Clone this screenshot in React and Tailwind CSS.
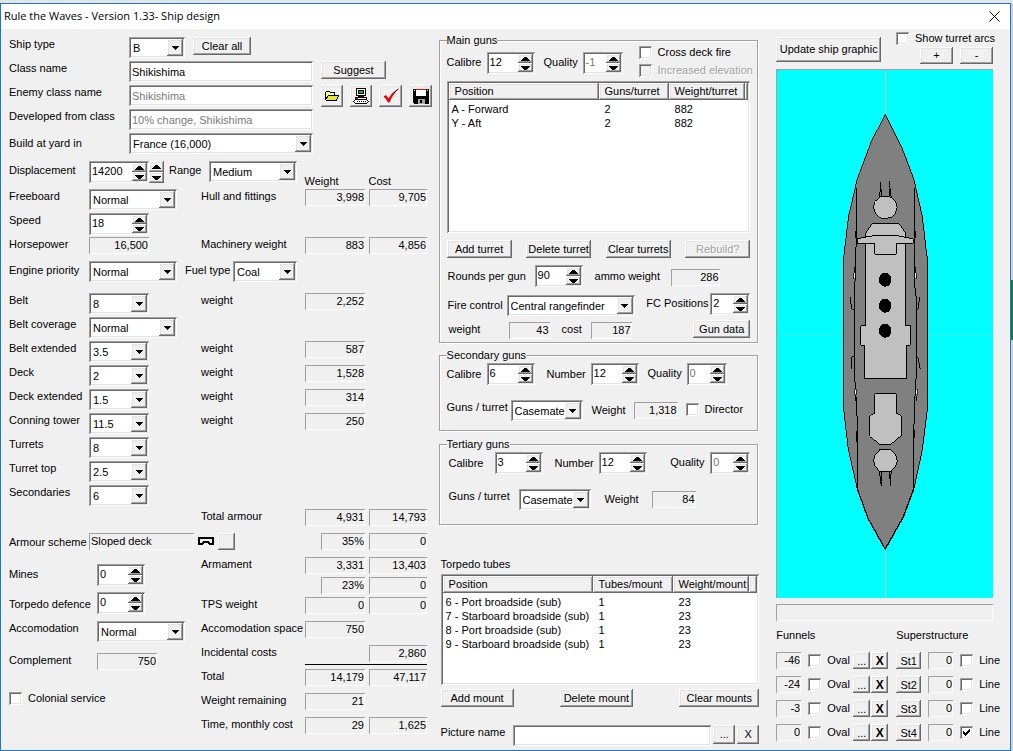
import React, { useId, useState } from 'react';
import clsx from 'clsx';

const sunken = 'shadow-[inset_1px_1px_0_#a0a0a0,inset_-1px_-1px_0_#fff,inset_2px_2px_0_#696969,inset_-2px_-2px_0_#e3e3e3]';
const sunkenThin = 'shadow-[inset_1px_1px_0_#a0a0a0,inset_-1px_-1px_0_#fff]';
const raised = 'shadow-[inset_-1px_-1px_0_#696969,inset_1px_1px_0_#fff,inset_-2px_-2px_0_#a0a0a0,inset_2px_2px_0_#e3e3e3]';

function Button({ className, children, ...props }) {
  return (
    <button
      type="button"
      className={clsx('flex shrink-0 items-center justify-center bg-[#f0f0f0] whitespace-nowrap disabled:text-[#a0a0a0] disabled:[text-shadow:1px_1px_0_#fff]', raised, className)}
      {...props}
    >
      {children}
    </button>
  );
}

function Label({ className, ...props }) {
  return <label className={clsx('shrink-0 leading-[14px] whitespace-nowrap', className)} {...props} />;
}

function Value({ className, children, ...props }) {
  return (
    <output className={clsx('block h-[17px] shrink-0 pr-px text-right leading-[17px]', sunkenThin, className)} {...props}>
      {children}
    </output>
  );
}

function TextBox({ className, ...props }) {
  return (
    <input
      type="text"
      className={clsx('h-[21px] min-w-0 bg-white px-[3px] outline-none disabled:text-[#7a7a7a]', sunken, className)}
      {...props}
    />
  );
}

function Select({ className, value, options = [], ...props }) {
  const [current, setCurrent] = useState(value);
  return (
    <div className={clsx('relative h-[21px] shrink-0', className)}>
      <select
        value={current}
        onChange={(e) => setCurrent(e.target.value)}
        className={clsx('block h-full w-full appearance-none bg-white pt-px pr-[18px] pl-1 outline-none', sunken)}
        {...props}
      >
        {[value, ...options].map(option => (
          <option key={option}>{option}</option>
        ))}
      </select>
      <span className={clsx('pointer-events-none absolute top-[2px] right-[2px] bottom-[2px] flex w-4 items-center justify-center bg-[#f0f0f0]', raised)}>
        <svg width="7" height="4" viewBox="0 0 7 4" shapeRendering="crispEdges">
          <path d="M0 0H7V1H6V2H5V3H4V4H3V3H2V2H1V1H0Z" />
        </svg>
      </span>
    </div>
  );
}

function Arrows({ className, onStep }) {
  return (
    <span className={clsx('flex w-[15px] shrink-0 flex-col', className)}>
      <button type="button" aria-label="Increase" onClick={() => onStep(1)} className={clsx('flex flex-1 items-center justify-center bg-[#f0f0f0]', raised)}>
        <svg width="9" height="4" viewBox="0 0 9 4" shapeRendering="crispEdges">
          <path d="M3 0H6V1H7V2H8V3H9V4H0V3H1V2H2V1H3Z" />
        </svg>
      </button>
      <button type="button" aria-label="Decrease" onClick={() => onStep(-1)} className={clsx('flex flex-1 items-center justify-center bg-[#f0f0f0]', raised)}>
        <svg width="9" height="4" viewBox="0 0 9 4" shapeRendering="crispEdges">
          <path d="M0 0H9V1H8V2H7V3H6V4H3V3H2V2H1V1H0Z" />
        </svg>
      </button>
    </span>
  );
}

function Spin({ id, value, disabled, className }) {
  const [current, setCurrent] = useState(value);
  return (
    <div className={clsx('flex h-[22px] shrink-0 bg-white p-[2px]', sunken, className)}>
      <input
        id={id}
        type="text"
        value={current}
        disabled={disabled}
        onChange={(e) => setCurrent(e.target.value)}
        className="w-0 min-w-0 flex-1 bg-transparent pb-px pl-px outline-none disabled:text-[#7a7a7a]"
      />
      <Arrows onStep={(step) => !disabled && setCurrent(String(Number(current) + step))} />
    </div>
  );
}

function LabeledSpin({ label, labelClass, value, disabled, className }) {
  const id = useId();
  return (
    <>
      <Label htmlFor={id} className={labelClass}>{label}</Label>
      <Spin id={id} value={value} disabled={disabled} className={className} />
    </>
  );
}

function LabeledSelect({ label, labelClass, value, className }) {
  const id = useId();
  return (
    <>
      <Label htmlFor={id} className={labelClass}>{label}</Label>
      <Select id={id} value={value} className={className} />
    </>
  );
}

function CheckBox({ label, checked = false, disabled, className }) {
  const [on, setOn] = useState(checked);
  return (
    <label className={clsx('flex shrink-0 items-center gap-[6px] leading-[14px] whitespace-nowrap', disabled && 'text-[#a0a0a0] [text-shadow:1px_1px_0_#fff]', className)}>
      <span className="relative flex">
        <input
          type="checkbox"
          checked={on}
          disabled={disabled}
          onChange={() => setOn(!on)}
          className={clsx('h-[13px] w-[13px] appearance-none bg-white disabled:bg-[#f0f0f0]', sunken)}
        />
        {on && (
          <svg className="pointer-events-none absolute top-[3px] left-[3px]" width="7" height="7" viewBox="0 0 7 7" shapeRendering="crispEdges">
            <path d="M0 2H1V3H2V4H3V3H4V2H5V1H6V0H7V3H6V4H5V5H4V6H3V7H2V6H1V5H0Z" />
          </svg>
        )}
      </span>
      {label}
    </label>
  );
}

// One line of the cost sheet: name, control, then weight and cost
function SheetRow({ label, labelClass, id, note, weight, cost, short, wide, className = 'h-6', children }) {
  return (
    <div className={clsx('grid grid-cols-[80px_112px_minmax(104px,1fr)_64px_58px] items-start', className)}>
      <Label htmlFor={id} className={labelClass}>{label}</Label>
      <div className={clsx('flex items-start', wide && 'col-span-2')}>{children}</div>
      {!wide && <span className="leading-[14px] whitespace-nowrap">{note}</span>}
      <div className="flex justify-end pr-1">
        {weight && <Value className={short ? 'w-11' : 'w-[60px]'}>{weight}</Value>}
      </div>
      {cost && <Value>{cost}</Value>}
    </div>
  );
}

function TotalRow({ label, weight, cost, short, className = 'h-6' }) {
  return (
    <div className={clsx('grid grid-cols-[minmax(104px,1fr)_64px_58px] items-start', className)}>
      <span className="leading-[14px] whitespace-nowrap">{label}</span>
      <div className="flex justify-end pr-1">
        {weight && <Value className={short ? 'w-11' : 'w-[60px]'}>{weight}</Value>}
      </div>
      {cost && <Value>{cost}</Value>}
    </div>
  );
}

function FolderIcon() {
  return (
    <svg width="16" height="14" viewBox="0 0 16 14" shapeRendering="crispEdges">
      <path d="M1.5 10.5V3.5L2.5 2.5H5.5L6.5 3.5H10.5V6.5H14.5L12.5 10.5Z" fill="#ffff66" stroke="#000" />
      <path d="M1.5 10.5L4.5 6.5H14.5L12.5 11.5H2.5Z" fill="#e6e63c" stroke="#000" />
      <path d="M3 4H5V5H3ZM6 5H8V6H6Z" fill="#fff" />
    </svg>
  );
}

function ComputerIcon() {
  return (
    <svg width="16" height="16" viewBox="0 0 16 16" shapeRendering="crispEdges">
      <path d="M3.5 0.5H12.5V7.5H3.5Z" fill="#fff" stroke="#000" />
      <path d="M5.5 2.5H10.5V5.5H5.5Z" fill="#00c030" stroke="#000" />
      <path d="M5 8H11V9H5Z" />
      <path d="M2.5 9.5H13.5V11.5H2.5Z" fill="#fff" stroke="#000" />
      <path d="M3 10H5V11H3Z" fill="#f00" />
      <path d="M2.5 11.5H13.5L15.5 13.5L13.5 15.5H2.5L0.5 13.5Z" fill="#fff" stroke="#000" />
      <path d="M4 13H5V14H4ZM6 13H7V14H6ZM8 13H9V14H8ZM10 13H11V14H10ZM12 13H13V14H12Z" />
    </svg>
  );
}

function TickIcon() {
  return (
    <svg width="16" height="16" viewBox="0 0 16 16">
      <path d="M0.500 8.500L3 7L5.500 10.500Q9 4 15.500 1Q10 6 6.500 14.500H5Q3.500 11 0.500 8.500Z" fill="#f00000" />
      <path d="M10 6Q12 3 15.500 1" fill="none" stroke="#700000" />
    </svg>
  );
}

function FloppyIcon() {
  return (
    <svg width="16" height="16" viewBox="0 0 16 16" shapeRendering="crispEdges">
      <path d="M0 1H16V16H1L0 15Z" />
      <path d="M3 1H13V8H3Z" fill="#fff" />
      <path d="M3 1H13V2H3Z" fill="#f00" />
      <path d="M1 2H2V3H1ZM14 2H15V3H14Z" fill="#fff" />
      <path d="M5 11H12V16H5Z" fill="#a8a8a8" />
      <path d="M7 12H9V15H7Z" />
    </svg>
  );
}

const armour = [
  ['Belt', '8', 'w-[60px]', '2,252'],
  ['Belt coverage', 'Normal', 'w-[88px]', null],
  ['Belt extended', '3.5', 'w-[60px]', '587'],
  ['Deck', '2', 'w-[60px]', '1,528'],
  ['Deck extended', '1.5', 'w-[60px]', '314'],
  ['Conning tower', '11.5', 'w-[60px]', '250'],
  ['Turrets', '8', 'w-[60px]', null],
  ['Turret top', '2.5', 'w-[60px]', null],
  ['Secondaries', '6', 'w-[60px]', null],
];

function HullColumn() {
  return (
    <div className="min-w-0 pt-2 pr-3">
      <div className="flex h-6 items-start">
        <Label htmlFor="shipType" className="w-[120px]">Ship type</Label>
        <Select id="shipType" value="B" options={['BC', 'CA', 'CL', 'DD']} className="w-14" />
        <Button className="ml-2 h-[18px] w-[58px]">Clear all</Button>
      </div>
      <div className="flex h-6 items-start">
        <Label htmlFor="className" className="w-[120px]">Class name</Label>
        <TextBox id="className" defaultValue="Shikishima" className="w-[184px]" />
        <Button className="ml-2 h-[18px] w-[65px]">Suggest</Button>
      </div>
      <div className="flex h-6 items-start">
        <Label htmlFor="enemyName" className="w-[120px]">Enemy class name</Label>
        <TextBox id="enemyName" defaultValue="Shikishima" disabled className="w-[184px] shrink-0" />
        <div className="ml-2 flex gap-[7px]">
          <Button aria-label="Open" className="h-[22px] w-[22px]"><FolderIcon /></Button>
          <Button aria-label="Export" className="h-[22px] w-[22px]"><ComputerIcon /></Button>
          <Button aria-label="Accept" className="h-[22px] w-[23px]"><TickIcon /></Button>
          <Button aria-label="Save" className="h-[22px] w-[23px]"><FloppyIcon /></Button>
        </div>
      </div>
      <div className="flex h-6 items-start">
        <Label htmlFor="developed" className="w-[120px]">Developed from class</Label>
        <TextBox id="developed" defaultValue="10% change, Shikishima" disabled className="w-[184px]" />
      </div>
      <div className="flex h-7 items-start">
        <Label htmlFor="yard" className="w-[120px] pt-[3px]">Build at yard in</Label>
        <Select id="yard" value="France (16,000)" className="w-[184px]" />
      </div>

      <div className="flex h-7 items-start">
        <LabeledSpin label="Displacement" labelClass="w-20 pt-[2px]" value="14200" className="w-[60px]" />
        <Arrows className="h-[22px]" onStep={() => {}} />
        <LabeledSelect label="Range" labelClass="w-[45px] pt-[2px] pl-[5px]" value="Medium" className="w-[88px]" />
        <div className="grid flex-1 grid-cols-[60px_58px] justify-end gap-x-1 self-end leading-4">
          <span>Weight</span>
          <span>Cost</span>
        </div>
      </div>

      <SheetRow label="Freeboard" id="freeboard" note="Hull and fittings" weight="3,998" cost="9,705">
        <Select id="freeboard" value="Normal" options={['Low', 'High']} className="w-[88px]" />
      </SheetRow>
      <SheetRow label="Speed" id="speed">
        <Spin id="speed" value="18" className="w-[60px]" />
      </SheetRow>
      <SheetRow label="Horsepower" id="horsepower" note="Machinery weight" weight="883" cost="4,856">
        <Value id="horsepower" className="w-[60px]">16,500</Value>
      </SheetRow>
      <SheetRow label="Engine priority" labelClass="pt-[2px]" id="engine" wide className="h-8">
        <Select id="engine" value="Normal" options={['Speed', 'Reliability']} className="mr-2 w-[88px]" />
        <LabeledSelect label="Fuel type" labelClass="w-12 pt-[2px]" value="Coal" className="w-16" />
      </SheetRow>

      {armour.map(([label, value, width, weight]) => (
        <SheetRow key={label} label={label} id={label} note={weight && 'weight'} weight={weight}>
          <Select id={label} value={value} className={width} />
        </SheetRow>
      ))}
      <SheetRow note="Total armour" weight="4,931" cost="14,793" />
      <SheetRow label="Armour scheme" labelClass="pt-[2px]" id="scheme" wide short weight="35%" cost="0">
        <output id="scheme" className={clsx('h-[17px] w-[105px] pl-[2px] leading-4', sunkenThin)}>Sloped deck</output>
        <svg className="mt-1 ml-1" width="16" height="9" viewBox="0 0 16 9" shapeRendering="crispEdges">
          <path d="M1 7V1H15V7H12L10 5H6L4 7Z" fill="none" stroke="#000" strokeWidth="2" />
        </svg>
        <Button aria-label="Change armour scheme" className="ml-1 h-[17px] w-[17px]" />
      </SheetRow>

      <div className="flex">
        <div className="w-48 shrink-0 pt-[7px]">
          <div className="flex h-7 items-start">
            <LabeledSpin label="Mines" labelClass="w-[88px] pt-[3px]" value="0" className="w-12" />
          </div>
          <div className="flex h-[29px] items-start">
            <LabeledSpin label="Torpedo defence" labelClass="w-[88px] pt-[5px]" value="0" className="w-12" />
          </div>
          <div className="flex h-8 items-start">
            <LabeledSelect label="Accomodation" labelClass="w-[88px]" value="Normal" className="w-[88px]" />
          </div>
          <div className="flex h-[38px] items-start">
            <Label htmlFor="complement" className="w-[88px]">Complement</Label>
            <Value id="complement" className="w-[60px]">750</Value>
          </div>
          <CheckBox label="Colonial service" />
        </div>
        <div className="flex-1">
          <TotalRow label="Armament" weight="3,331" cost="13,403" className="h-5" />
          <TotalRow short weight="23%" cost="0" className="h-5" />
          <TotalRow label="TPS weight" weight="0" cost="0" />
          <TotalRow label="Accomodation space" weight="750" />
          <TotalRow label="Incidental costs" cost="2,860" className="h-[19px]" />
          <div className="mb-1 ml-[104px] h-px bg-black" />
          <TotalRow label="Total" weight="14,179" cost="47,117" />
          <TotalRow label="Weight remaining" weight="21" />
          <TotalRow label="Time, monthly cost" weight="29" cost="1,625" />
        </div>
      </div>
    </div>
  );
}

function Group({ title, className, children }) {
  return (
    <fieldset className={clsx('min-w-0 border border-[#a0a0a0] px-[7px] shadow-[1px_1px_0_#fff,inset_1px_1px_0_#fff]', className)}>
      <legend className="leading-[10px]">{title}</legend>
      {children}
    </fieldset>
  );
}

function ListView({ heads, rows, middle, className }) {
  return (
    <div className={clsx('bg-white p-[2px]', sunken, className)}>
      <table className="w-full table-fixed border-collapse">
        <thead>
          <tr>
            <th className={clsx('h-[17px] w-[150px] bg-[#f0f0f0] pl-[6px] text-left font-normal', raised)}>{heads[0]}</th>
            <th className={clsx('bg-[#f0f0f0] pl-[6px] text-left font-normal whitespace-nowrap', middle, raised)}>{heads[1]}</th>
            <th className={clsx('w-[76px] bg-[#f0f0f0] pl-[6px] text-left font-normal whitespace-nowrap', raised)}>{heads[2]}</th>
            <th className={clsx('bg-[#f0f0f0]', raised)} />
          </tr>
        </thead>
        <tbody className="before:block before:h-[2px] before:content-['']">
          {rows.map((row) => (
            <tr key={row[0]} className="leading-[14px]">
              <td className="pl-[3px] whitespace-nowrap">{row[0]}</td>
              <td className="pl-[6px]">{row[1]}</td>
              <td className="pl-[6px]">{row[2]}</td>
              <td />
            </tr>
          ))}
        </tbody>
      </table>
    </div>
  );
}

function GunsColumn() {
  return (
    <div className="min-w-0 pt-[6px] pr-[18px]">
      <Group title="Main guns">
        <div className="flex h-9 items-start">
          <LabeledSpin label="Calibre" labelClass="w-10 pt-[10px]" value="12" className="mt-[7px] w-12" />
          <LabeledSpin label="Quality" labelClass="w-12 pt-[10px] pl-[9px]" value="-1" disabled className="mt-[7px] w-10" />
          <div className="ml-4 flex flex-col gap-1">
            <CheckBox label="Cross deck fire" />
            <CheckBox label="Increased elevation" disabled />
          </div>
        </div>
        <ListView
          className="h-[152px]"
          middle="w-[70px]"
          heads={['Position', 'Guns/turret', 'Weight/turret']}
          rows={[['A - Forward', '2', '882'], ['Y - Aft', '2', '882']]}
        />
        <div className="flex justify-between pt-[7px]">
          <Button className="h-[18px] w-[65px]">Add turret</Button>
          <Button className="h-[18px] w-[65px]">Delete turret</Button>
          <Button className="h-[18px] w-[65px]">Clear turrets</Button>
          <Button className="h-[18px] w-[65px]" disabled>Rebuild?</Button>
        </div>
        <div className="flex h-[35px] items-start pt-[7px]">
          <LabeledSpin label="Rounds per gun" labelClass="w-[88px] pt-1 pl-px" value="90" className="w-12" />
          <Label htmlFor="ammo" className="w-[88px] pt-1 pl-3">ammo weight</Label>
          <Value id="ammo" className="mt-1 w-[49px]">286</Value>
        </div>
        <div className="flex h-[27px] items-start">
          <LabeledSelect label="Fire control" labelClass="w-[60px] pt-[5px] pl-px" value="Central rangefinder" className="mt-[2px] w-32" />
          <div className="ml-auto flex items-start">
            <LabeledSpin label="FC Positions" labelClass="w-16 pt-[3px]" value="2" className="w-10" />
          </div>
        </div>
        <div className="flex h-[22px] items-start">
          <Label htmlFor="fcWeight" className="w-[62px] pt-[2px] pl-[2px]">weight</Label>
          <Value id="fcWeight" className="mt-[2px] w-[41px]">43</Value>
          <Label htmlFor="fcCost" className="w-[41px] pt-[2px] pl-3">cost</Label>
          <Value id="fcCost" className="mt-[2px] w-[41px]">187</Value>
          <Button className="ml-auto h-[18px] w-[57px]">Gun data</Button>
        </div>
      </Group>

      <Group title="Secondary guns" className="mt-[7px]">
        <div className="flex h-10 items-start pt-[3px]">
          <LabeledSpin label="Calibre" labelClass="w-10 pt-1" value="6" className="w-12" />
          <LabeledSpin label="Number" labelClass="w-14 pt-1 pl-3" value="12" className="w-12" />
          <LabeledSpin label="Quality" labelClass="w-12 pt-[3px] pl-[9px]" value="0" disabled className="w-10" />
        </div>
        <div className="flex h-[30px] items-start">
          <LabeledSelect label="Guns / turret" labelClass="w-16" value="Casemates" className="w-[72px]" />
          <Label htmlFor="secWeight" className="w-[51px] pt-[3px] pl-[9px]">Weight</Label>
          <Value id="secWeight" className="mt-[2px] w-11">1,318</Value>
          <CheckBox label="Director" className="ml-2 pt-[2px]" />
        </div>
      </Group>

      <Group title="Tertiary guns" className="mt-2">
        <div className="flex h-10 items-start pt-[3px]">
          <LabeledSpin label="Calibre" labelClass="w-12 pt-1 pl-[2px]" value="3" className="w-12" />
          <LabeledSpin label="Number" labelClass="w-14 pt-1 pl-3" value="12" className="w-12" />
          <div className="ml-auto flex items-start">
            <LabeledSpin label="Quality" labelClass="w-10 pt-[3px]" value="0" disabled className="w-10" />
          </div>
        </div>
        <div className="flex h-[35px] items-start">
          <LabeledSelect label="Guns / turret" labelClass="w-[72px] pl-[2px]" value="Casemates" className="w-[72px]" />
          <Label htmlFor="terWeight" className="w-[61px] pt-[3px] pl-[14px]">Weight</Label>
          <Value id="terWeight" className="mt-[2px] w-11">84</Value>
        </div>
      </Group>

      <div className="-mr-px pt-8 pl-[2px]">
        <h2 className="mb-[3px] leading-[14px]">Torpedo tubes</h2>
        <ListView
          className="h-[111px]"
          middle="w-20"
          heads={['Position', 'Tubes/mount', 'Weight/mount']}
          rows={[
            ['6 - Port broadside (sub)', '1', '23'],
            ['7 - Starboard broadside (sub)', '1', '23'],
            ['8 - Port broadside (sub)', '1', '23'],
            ['9 - Starboard broadside (sub)', '1', '23'],
          ]}
        />
        <div className="flex justify-between pt-1">
          <Button className="h-[18px] w-[73px]">Add mount</Button>
          <Button className="h-[18px] w-[73px]">Delete mount</Button>
          <Button className="h-[18px] w-20">Clear mounts</Button>
        </div>
        <div className="flex items-start pt-[18px]">
          <Label htmlFor="picture" className="w-[72px]">Picture name</Label>
          <TextBox id="picture" className="flex-1" />
          <Button className="ml-[2px] h-[19px] w-[22px]">...</Button>
          <Button className="ml-[2px] h-[19px] w-[22px]">X</Button>
        </div>
      </div>
    </div>
  );
}

function ShipPlan() {
  return (
    <svg className="block h-auto w-full bg-[#00ffff]" viewBox="-144 -93 648 1587" shapeRendering="crispEdges" role="img" aria-label="Ship graphic">
      <g fill="none" stroke="#c0c0c0" strokeWidth="3">
        <path d="M181.500 -93V1494" />
        <path d="M-144 700H504" strokeOpacity="0.3" />
      </g>
      <g stroke="#000" strokeWidth="3">
        <path
          d="M181 40L138 125L97 235L70 350L56 470V925L70 1045L97 1165L130 1255L181 1346L235 1250L267 1165L292 1050L307 930V470L293 350L267 235L235 150Z"
          fill="#808080"
        />
        <path d="M94 260V410L91 530L88 570V810L94 900L97 960V1165M268 260V540L275 600V810L268 930L265 1165" fill="none" />
        <path d="M97 1165L130 1255L181 1346L235 1250L267 1165" fill="none" strokeWidth="4" />
        <g fill="none">
          <path d="M92 390V412M271 390V412M88 498V515M271 500V518M76 590L80 626H86M284 590L280 626H275M86 768H81L79 806M279 768L286 806M92 885V902M274 885V902M95 990V1025M269 987V1012" />
        </g>
        <path d="M86 516H91V534H86ZM269 516H274V534H269ZM89 866H94V882H89ZM272 866H277V882H272Z" fill="#fff" strokeWidth="2" />
        <g fill="#c0c0c0">
          <path d="M122 420V675H107V733H119V835H244V733H256V673H241V420Z" />
          <path d="M122 415V397L143 367H221L241 394V415Z" />
          <path d="M97 414L122 409L150 404H212L241 409L265 414V427H214V460H149V427H97Z" />
          <path d="M149 880H214V938L229 945V1005L196 1033H167L134 1007V945L149 938Z" />
          <path d="M166 288L150 302L146 319L151 337L166 351L181 353L199 350L212 337L217 319L212 302L196 288Z" />
          <path d="M166 1046H197L212 1062L217 1081L212 1098L196 1114H166L151 1098L146 1081L151 1062Z" />
        </g>
        <path d="M166 242V270L163 290M169 265V287H194V265M194 240L196 270L199 290" fill="none" />
        <path d="M163 1112L166 1130L169 1157V1114H194L197 1157V1130L200 1108" fill="none" />
      </g>
      <ellipse cx="181" cy="537" rx="19" ry="21" />
      <ellipse cx="181" cy="615" rx="19" ry="21" />
      <ellipse cx="181" cy="690" rx="19" ry="21" />
    </svg>
  );
}

const funnels = [
  ['-46', 'St1', false],
  ['-24', 'St2', false],
  ['-3', 'St3', false],
  ['0', 'St4', true],
];

function GraphicColumn() {
  return (
    <div className="min-w-0">
      <div className="mr-[7px] flex h-10 items-start justify-between">
        <Button className="mt-2 h-[25px] w-[105px]">Update ship graphic</Button>
        <div className="w-[97px] pt-[2px]">
          <CheckBox label="Show turret arcs" />
          <div className="flex justify-end gap-[7px] pt-[2px]">
            <Button aria-label="Zoom in" className="h-[17px] w-[33px]">+</Button>
            <Button aria-label="Zoom out" className="h-[17px] w-[33px]">-</Button>
          </div>
        </div>
      </div>
      <div className="mr-[7px] border-t border-l border-[#a0a0a0]">
        <ShipPlan />
      </div>
      <div className={clsx('mt-[6px] mr-[7px] h-[17px]', sunkenThin)} />
      <div className="mt-[7px] flex h-6 leading-[14px]">
        <span className="w-[120px]">Funnels</span>
        <span>Superstructure</span>
      </div>
      {funnels.map(([position, name, line]) => (
        <div key={name} className="flex h-6 items-start">
          <Value className="w-[25px]">{position}</Value>
          <CheckBox label="Oval" className="ml-[7px] w-[45px] pt-px" />
          <Button className="h-[17px] w-[17px]">...</Button>
          <Button className="ml-px h-[17px] w-[17px] text-xs font-bold">X</Button>
          <Button className="ml-2 h-[17px] w-[25px]">{name}</Button>
          <Value className="ml-[7px] w-[25px]">0</Value>
          <CheckBox label="Line" checked={line} className="ml-[7px] pt-px" />
        </div>
      ))}
    </div>
  );
}

function App() {
  return (
    <div className="flex min-h-screen bg-[#e4e4e4] pt-[3px] font-['Liberation_Sans',Arial,sans-serif] text-[11px] text-black">
      <main className="flex min-w-0 flex-1 flex-col border border-[#1979ca] bg-[#f0f0f0]">
        <header className="flex h-[25px] items-center justify-between bg-white pr-[10px] pl-[3px]">
          <h1 className="font-['Open_Sans','Noto_Sans',sans-serif] text-[11px]">Rule the Waves - Version 1.33- Ship design</h1>
          <button type="button" aria-label="Close">
            <svg width="11" height="11" viewBox="0 0 11 11">
              <path d="M0.500 0.500L10.500 10.500M10.500 0.500L0.500 10.500" stroke="#000" />
            </svg>
          </button>
        </header>
        <div className="grid flex-1 grid-cols-[minmax(0,430fr)_minmax(0,338fr)_minmax(0,224fr)] pr-[10px] pl-2">
          <HullColumn />
          <GunsColumn />
          <GraphicColumn />
        </div>
      </main>
      {/* sliver of the desktop behind the window */}
      <div className="flex w-[2px] flex-col bg-[#d0d0d0]">
        <div className="basis-[37%]" />
        <div className="basis-[8%] bg-[#107c41]" />
      </div>
    </div>
  );
}

export default App;
